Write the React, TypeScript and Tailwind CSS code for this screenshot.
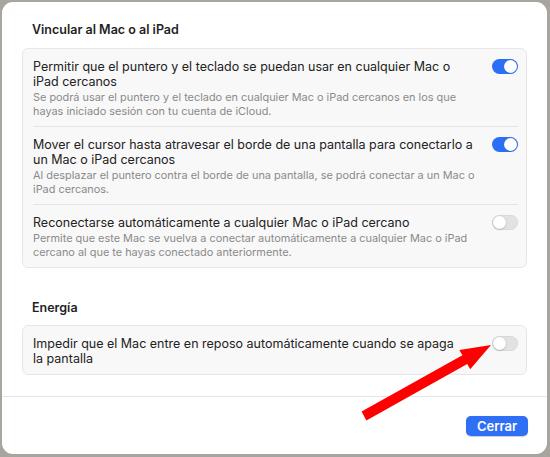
import React from "react";

function Toggle({ on }: { on: boolean }) {
  return on ? (
    <div className="relative w-[26px] h-[15px] rounded-full bg-[#2a6ff5] shrink-0">
      <div className="absolute right-[1px] top-[1px] w-[13px] h-[13px] rounded-full bg-white shadow-[0_0_1px_rgba(0,0,0,0.3)]" />
    </div>
  ) : (
    <div className="relative w-[26px] h-[15px] rounded-full bg-[#e2e2e2] shrink-0 shadow-[inset_0_0_0_0.5px_rgba(0,0,0,0.08)]">
      <div className="absolute left-[1px] top-[1px] w-[13px] h-[13px] rounded-full bg-white shadow-[0_0.5px_1.5px_rgba(0,0,0,0.3)]" />
    </div>
  );
}

function Row({
  title,
  sub,
  on,
}: {
  title: React.ReactNode;
  sub?: React.ReactNode;
  on: boolean;
}) {
  return (
    <div className="flex items-start pl-[10px] pr-[8px] pt-[10px] pb-[8px]">
      <div className="flex-1 min-w-0 flex flex-col gap-[1px] whitespace-nowrap">
        <div className="text-[12.5px] leading-[15px] text-[#222222]">{title}</div>
        {sub && (
          <div className="text-[10.9px] leading-[14px] text-[#8a8a8a]">{sub}</div>
        )}
      </div>
      <div className="ml-[8px]">
        <Toggle on={on} />
      </div>
    </div>
  );
}

export default function App() {
  return (
    <div
      className="w-[550px] h-[457px] bg-[#a8a49e] pl-[2px] pt-[2px] pr-[3px] pb-[3px]"
      style={{ fontFamily: "Inter, 'Liberation Sans', sans-serif" }}
    >
      <div className="relative w-full h-full bg-white rounded-[11px] flex flex-col overflow-hidden">
        <div className="px-[20px] pt-[20px]">
          <div className="pl-[10px] text-[12.5px] leading-[16px] font-semibold text-[#1f1f1f]">
            Vincular al Mac o al iPad
          </div>
          <div className="mt-[10px] bg-[#f8f8f8] border border-[#e6e6e6] rounded-[6px]">
            <Row
              title={
                <>
                  Permitir que el puntero y el teclado se puedan usar en cualquier Mac o
                  <br />
                  iPad cercanos
                </>
              }
              sub={
                <>
                  Se podrá usar el puntero y el teclado en cualquier Mac o iPad cercanos en los que
                  <br />
                  hayas iniciado sesión con tu cuenta de iCloud.
                </>
              }
              on
            />
            <div className="ml-[10px] mr-[8px] h-px bg-[#e4e4e4]" />
            <Row
              title={
                <>
                  Mover el cursor hasta atravesar el borde de una pantalla para conectarlo a
                  <br />
                  un Mac o iPad cercanos
                </>
              }
              sub={
                <>
                  Al desplazar el puntero contra el borde de una pantalla, se podrá conectar a un Mac o
                  <br />
                  iPad cercanos.
                </>
              }
              on
            />
            <div className="ml-[10px] mr-[8px] h-px bg-[#e4e4e4]" />
            <Row
              title={<>Reconectarse automáticamente a cualquier Mac o iPad cercano</>}
              sub={
                <>
                  Permite que este Mac se vuelva a conectar automáticamente a cualquier Mac o iPad
                  <br />
                  cercano al que te hayas conectado anteriormente.
                </>
              }
              on={false}
            />
          </div>

          <div className="mt-[32px] pl-[10px] text-[12.5px] leading-[16px] font-semibold text-[#1f1f1f]">
            Energía
          </div>
          <div className="mt-[9px] bg-[#f8f8f8] border border-[#e6e6e6] rounded-[6px]">
            <Row
              title={
                <>
                  Impedir que el Mac entre en reposo automáticamente cuando se apaga
                  <br />
                  la pantalla
                </>
              }
              on={false}
            />
          </div>
        </div>

        <div className="mt-[21px] h-px bg-[#e6e6e6]" />
        <div className="flex justify-end px-[19px] pt-[19px]">
          <button className="h-[20px] w-[62px] rounded-[5px] bg-[#2e6ff6] text-white text-[13px] font-semibold leading-[20px] shadow-[0_0.5px_1px_rgba(0,0,0,0.2)]">
            Cerrar
          </button>
        </div>

        <svg
          className="absolute left-0 top-0 pointer-events-none"
          width="545"
          height="452"
          viewBox="2 2 545 452"
        >
          <polygon
            points="361.6,411.6 462.4,355.2 459.4,350 491,345 470.2,369.2 467.2,364 366.4,420.4"
            fill="#ff0000"
          />
        </svg>
      </div>
    </div>
  );
}
